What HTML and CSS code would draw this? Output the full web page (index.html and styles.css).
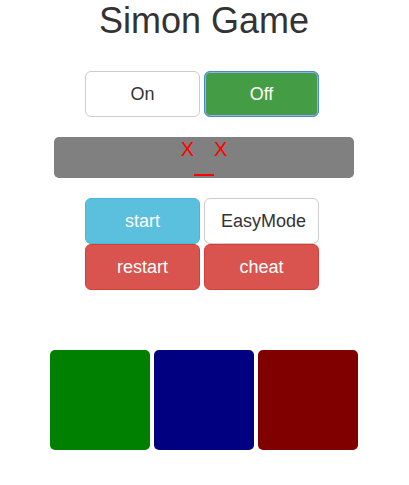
FILE: index.html
```html
<!DOCTYPE html>
<html>
<head>
<meta charset="utf-8">
<link rel="stylesheet" href="styles.css">
</head>
<body>
<div class="page">
  <h1 class="title">Simon Game</h1>
  <div class="row row-power">
    <button class="btn btn-default">On</button>
    <button class="btn btn-success btn-focus">Off</button>
  </div>
  <div class="display">
    <span class="x">X</span><span class="dash"></span><span class="x">X</span>
  </div>
  <div class="controls">
    <div class="row">
      <button class="btn btn-info">start</button>
      <button class="btn btn-default">EasyMode</button>
    </div>
    <div class="row">
      <button class="btn btn-danger">restart</button>
      <button class="btn btn-danger">cheat</button>
    </div>
  </div>
  <div class="pads">
    <div class="pad pad-green"></div>
    <div class="pad pad-blue"></div>
    <div class="pad pad-red"></div>
  </div>
</div>
</body>
</html>
```

FILE: styles.css
```css
* { box-sizing: border-box; }
html, body { margin: 0; padding: 0; background: #fff; }
body {
  font-family: "Liberation Sans", Arial, sans-serif;
  color: #333;
  width: 409px;
}
.page {
  display: flex;
  flex-direction: column;
  align-items: center;
  padding-right: 1px;
}
.title {
  margin: 0;
  padding-top: 1px;
  font-size: 36px;
  font-weight: 500;
  line-height: 40px;
  color: #333;
}
.row {
  display: flex;
  gap: 4px;
  padding-right: 4px;
  align-self: stretch;
  justify-content: center;
}
.row-power { margin-top: 30px; }
.btn {
  width: 115px;
  height: 46px;
  font-family: "Liberation Sans", Arial, sans-serif;
  font-size: 18px;
  line-height: 24px;
  padding: 10px 16px;
  border-radius: 6px;
  border: 1px solid transparent;
  cursor: pointer;
  text-align: center;
}
.btn-default { background: #fff; border-color: #ccc; color: #333; }
.btn-success { background: #449d44; border-color: #398439; color: #fff; }
.btn-focus { border-color: #4d86d6; box-shadow: inset 0 0 0 1px #8fb6ec; }
.btn-info { background: #5bc0de; border-color: #46b8da; color: #fff; }
.btn-danger { background: #d9534f; border-color: #d43f3a; color: #fff; }
.display {
  margin-top: 20px;
  width: 300px;
  height: 41px;
  background: #808080;
  border-radius: 5px;
  text-align: center;
  color: #f00;
  font-size: 20px;
  line-height: 23px;
  padding-top: 1px;
  overflow: hidden;
}
.dash {
  display: inline-block;
  width: 20px;
  height: 2px;
  background: #f00;
  vertical-align: -20px;
}
.controls { margin-top: 20px; align-self: stretch; display: flex; flex-direction: column; }
.pads {
  margin-top: 60px;
  display: flex;
  gap: 4px;
}
.pad { width: 100px; height: 100px; border-radius: 5px; }
.pad-green { background: #008000; }
.pad-blue { background: #000080; }
.pad-red { background: #800000; }
```
